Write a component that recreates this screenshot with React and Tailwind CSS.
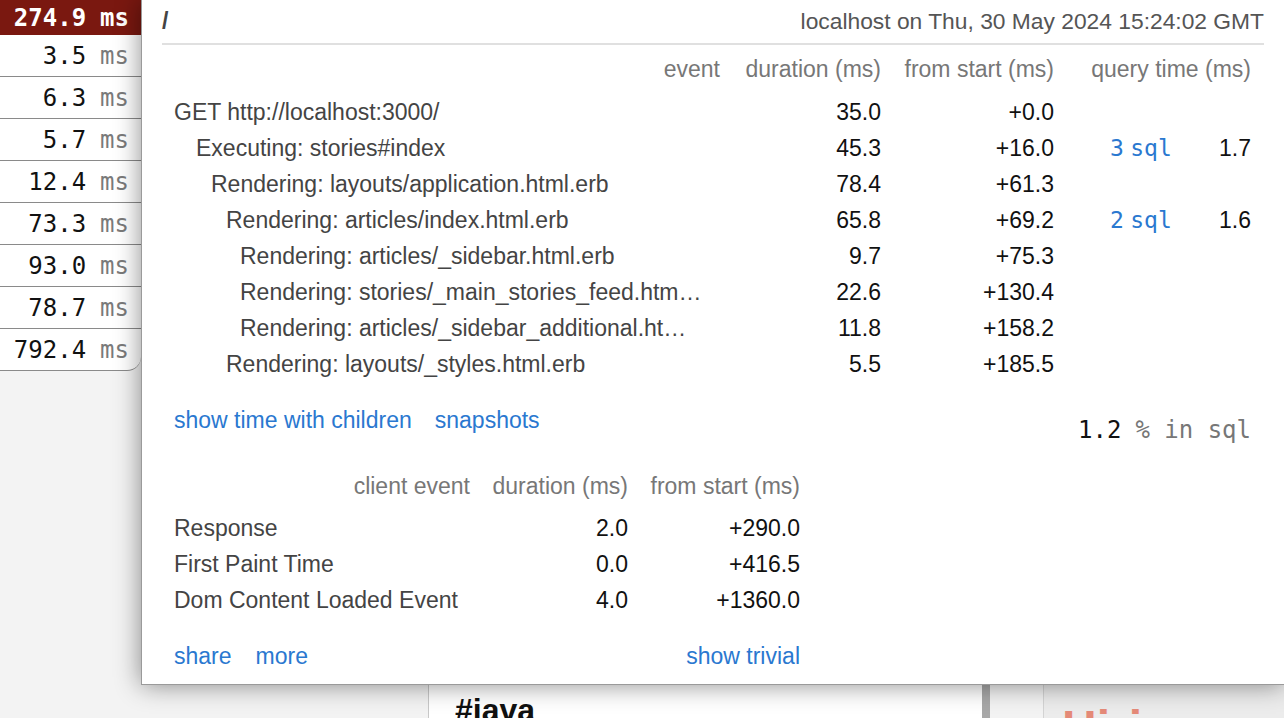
import React from "react";

const buttons = [
  { value: "274.9", active: true },
  { value: "3.5" },
  { value: "6.3" },
  { value: "5.7" },
  { value: "12.4" },
  { value: "73.3" },
  { value: "93.0" },
  { value: "78.7" },
  { value: "792.4", last: true },
];

const timings = [
  { name: "GET http://localhost:3000/", depth: 0, duration: "35.0", start: "+0.0" },
  { name: "Executing: stories#index", depth: 1, duration: "45.3", start: "+16.0", sql: "3", query: "1.7" },
  { name: "Rendering: layouts/application.html.erb", depth: 2, duration: "78.4", start: "+61.3" },
  { name: "Rendering: articles/index.html.erb", depth: 3, duration: "65.8", start: "+69.2", sql: "2", query: "1.6" },
  { name: "Rendering: articles/_sidebar.html.erb", depth: 4, duration: "9.7", start: "+75.3" },
  { name: "Rendering: stories/_main_stories_feed.html.erb", depth: 4, duration: "22.6", start: "+130.4" },
  { name: "Rendering: articles/_sidebar_additional.html.erb", depth: 4, duration: "11.8", start: "+158.2" },
  { name: "Rendering: layouts/_styles.html.erb", depth: 3, duration: "5.5", start: "+185.5" },
];

const clientTimings = [
  { name: "Response", duration: "2.0", start: "+290.0" },
  { name: "First Paint Time", duration: "0.0", start: "+416.5" },
  { name: "Dom Content Loaded Event", duration: "4.0", start: "+1360.0" },
];

const indents = ["pl-0", "pl-[22px]", "pl-[37px]", "pl-[52px]", "pl-[66px]"];

const mono = "font-['DejaVu_Sans_Mono','Liberation_Mono',monospace]";

const ResultButton = ({ value, active, last }) => (
  <div
    className={
      active
        ? `h-[35px] flex items-center justify-end pr-[12px] bg-[#7a1810] text-white font-bold text-[24px] ${mono}`
        : `h-[42px] flex items-center justify-end pr-[12px] bg-white border-b border-[#8a8a8a] text-[24px] ${mono} ${last ? "rounded-br-[14px]" : ""}`
    }
  >
    <span className={active ? "" : "text-[#111]"}>{value}</span>
    <span className={active ? "ml-[14px]" : "ml-[14px] text-[#7a7a7a]"}>ms</span>
  </div>
);

export default function App() {
  return (
    <div className="relative h-[718px] w-[1284px] overflow-hidden bg-[#f3f3f3] font-['Liberation_Sans',Arial,sans-serif]">
      {/* page underneath */}
      <div className="flex h-full">
        <div className="w-[428px] shrink-0" />
        <div className="w-[554px] shrink-0 border-l border-[#c8c8c8] bg-white pl-[26px] pt-[694px]">
          <h2 className="text-[32px] font-bold leading-none text-[#111]">#java</h2>
        </div>
        <div className="w-[8px] shrink-0 bg-[#a8a8a8]" />
        <div className="w-[53px] shrink-0" />
        <div className="flex-1 border-l border-[#d4d4d4] bg-[#ececec] pl-[18px] pt-[704px]">
          <span className="text-[48px] font-bold leading-none text-[#e58a78]">Hiring</span>
        </div>
      </div>

      {/* profiler overlay */}
      <div className="absolute left-0 top-0 flex items-start">
        <div className="w-[141px] shrink-0">
          {buttons.map((b) => (
            <ResultButton key={b.value} {...b} />
          ))}
        </div>

        <div className="relative z-10 w-[1143px] border-l border-b border-[#9a9a9a] bg-white px-[20px] pb-[10px] shadow-[0_0_24px_rgba(0,0,0,0.45)]">
          {/* header */}
          <div className="flex h-[45px] items-center justify-between border-b-2 border-[#e0e0e0]">
            <span className="text-[23px] font-bold text-[#444]">/</span>
            <span className="text-[22.8px] text-[#555]">localhost on Thu, 30 May 2024 15:24:02 GMT</span>
          </div>

          {/* server timings */}
          <div className="ml-[12px] w-[1077px] text-[23px]">
            <div className="grid h-[49px] grid-cols-[550px_157px_173px_197px] items-center text-right text-[#777]">
              <span className="pr-[4px]">event</span>
              <span>duration (ms)</span>
              <span>from start (ms)</span>
              <span>query time (ms)</span>
            </div>
            {timings.map((t) => (
              <div key={t.name} className="grid h-[36px] grid-cols-[550px_157px_173px_136px_61px] items-center">
                <span className={`truncate pr-[20px] text-[#444] ${indents[t.depth]}`}>{t.name}</span>
                <span className="text-right text-[#111]">{t.duration}</span>
                <span className="text-right text-[#111]">{t.start}</span>
                <span className="pl-[56px] text-[#2a78d0]">
                  {t.sql && (
                    <>
                      <span className={mono}>{t.sql}</span> <span className={mono}>sql</span>
                    </>
                  )}
                </span>
                <span className="text-right text-[#111]">{t.query}</span>
              </div>
            ))}
          </div>

          {/* links + sql share */}
          <div className="ml-[12px] mt-[20px] flex w-[1077px] items-start justify-between text-[23px]">
            <div className="flex h-[36px] items-center gap-[23px] text-[#2a78d0]">
              <span>show time with children</span>
              <span>snapshots</span>
            </div>
            <div className={`mt-[10px] flex h-[36px] items-center ${mono} text-[24px]`}>
              <span className="text-[#111]">1.2</span>
              <span className="ml-[14px] text-[#777]">% in sql</span>
            </div>
          </div>

          {/* client timings */}
          <div className="ml-[12px] mt-[14px] w-[626px] text-[23px]">
            <div className="grid h-[48px] grid-cols-[296px_158px_172px] items-center text-right text-[#777]">
              <span>client event</span>
              <span>duration (ms)</span>
              <span>from start (ms)</span>
            </div>
            {clientTimings.map((c) => (
              <div key={c.name} className="grid h-[36px] grid-cols-[296px_158px_172px] items-center">
                <span className="text-[#444]">{c.name}</span>
                <span className="text-right text-[#111]">{c.duration}</span>
                <span className="text-right text-[#111]">{c.start}</span>
              </div>
            ))}
          </div>

          {/* footer */}
          <div className="ml-[12px] mt-[20px] flex h-[36px] w-[626px] items-center justify-between text-[23px] text-[#2a78d0]">
            <div className="flex gap-[24px]">
              <span>share</span>
              <span>more</span>
            </div>
            <span>show trivial</span>
          </div>
        </div>
      </div>
    </div>
  );
}
